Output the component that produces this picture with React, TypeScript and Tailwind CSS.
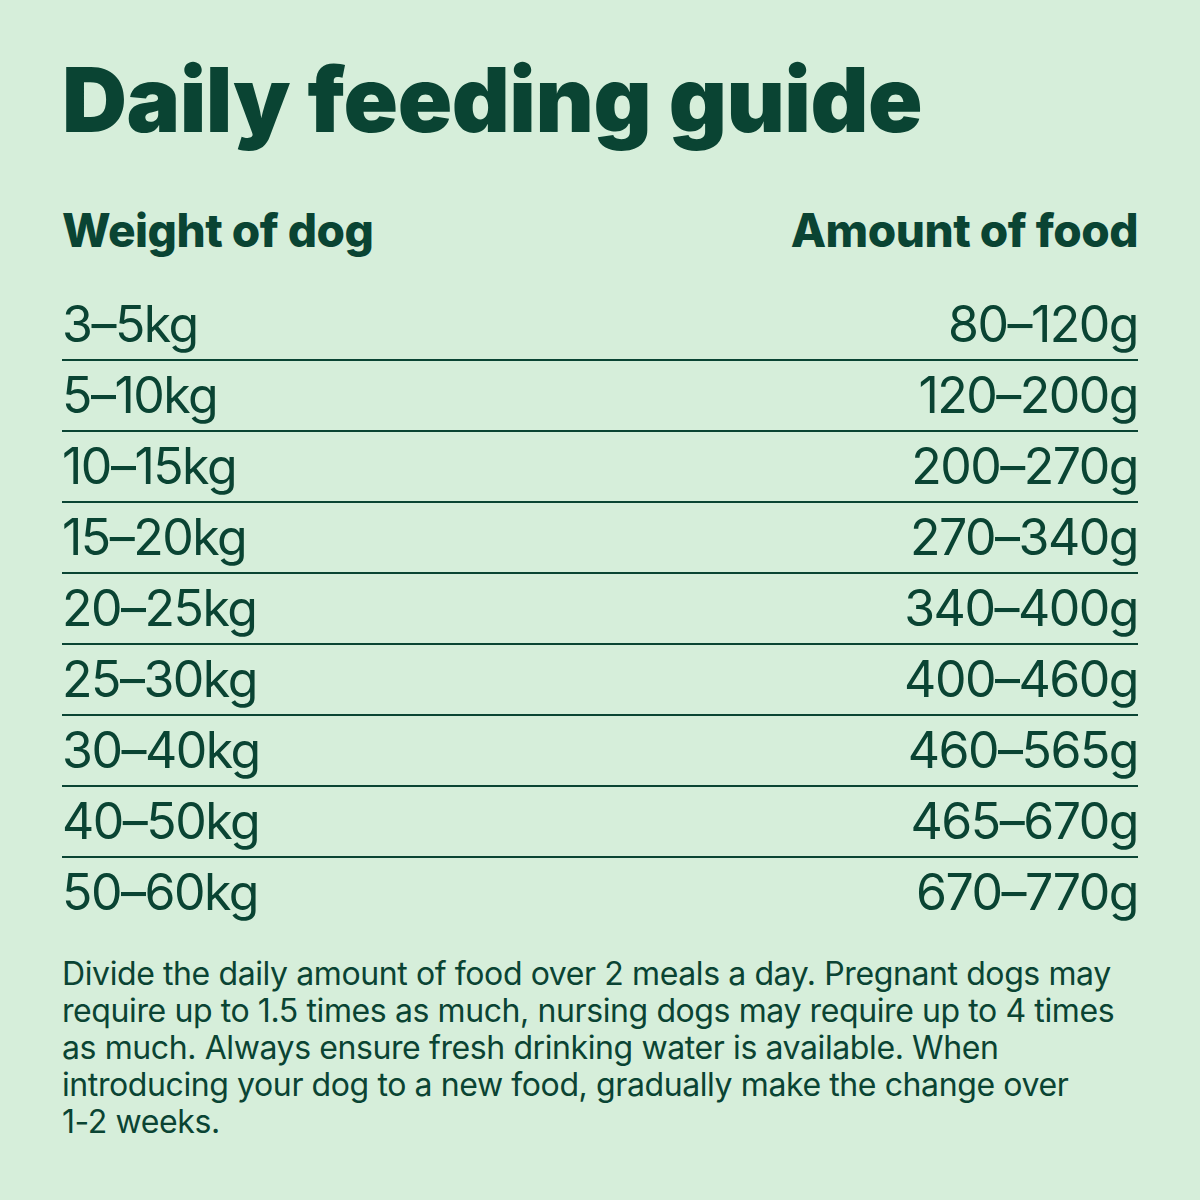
import React from 'react';

const rows: [string, string][] = [
    ['3–5kg', '80–120g'],
    ['5–10kg', '120–200g'],
    ['10–15kg', '200–270g'],
    ['15–20kg', '270–340g'],
    ['20–25kg', '340–400g'],
    ['25–30kg', '400–460g'],
    ['30–40kg', '460–565g'],
    ['40–50kg', '465–670g'],
    ['50–60kg', '670–770g'],
];

const App: React.FC = () => {
    return (
        <div className="w-[1200px] h-[1200px] bg-[#d6eeda] text-[#0a4433] px-[62px] pt-[48px]" style={{ fontFamily: 'Inter, "Noto Sans", sans-serif' }}>
            <h1 className="text-[90px] font-black leading-[104px] tracking-[-0.5px]">Daily feeding guide</h1>
            <div className="flex justify-between mt-[50px] text-[46px] font-extrabold leading-[56px] tracking-[-0.5px]">
                <span>Weight of dog</span>
                <span>Amount of food</span>
            </div>
            <div className="mt-[32px]">
                {rows.map(([w, a], i) => (
                    <div key={w} className={`flex justify-between text-[50px] leading-[69px] tracking-[-1.5px] ${i < rows.length - 1 ? 'border-b-2 border-[#0a4433]' : ''}`}>
                        <span>{w}</span>
                        <span>{a}</span>
                    </div>
                ))}
            </div>
            <p className="mt-[28px] text-[32px] leading-[37px] tracking-[-0.4px]">
                Divide the daily amount of food over 2 meals a day. Pregnant dogs may<br />
                require up to 1.5 times as much, nursing dogs may require up to 4 times<br />
                as much. Always ensure fresh drinking water is available. When<br />
                introducing your dog to a new food, gradually make the change over<br />
                1-2 weeks.
            </p>
        </div>
    );
};

export default App;
